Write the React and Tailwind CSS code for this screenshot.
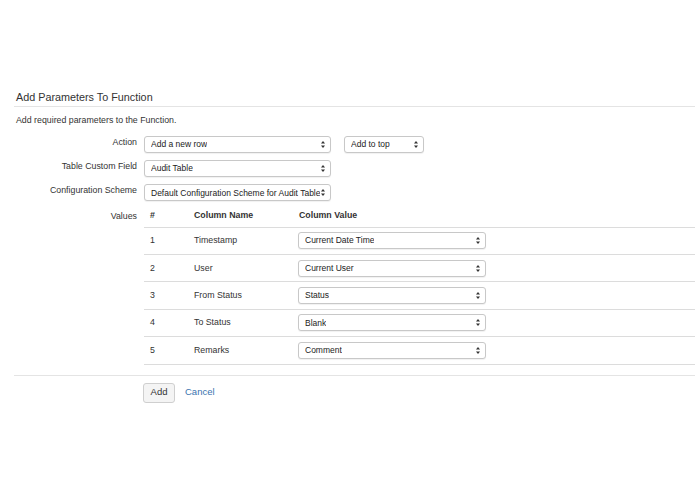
import React from 'react';

function Arrows() {
  return (
    <svg width="4" height="7" viewBox="0 0 4 7" className="shrink-0">
      <path d="M2 0 L4 2.6 L0 2.6 Z" fill="#333" />
      <path d="M2 7 L4 4.4 L0 4.4 Z" fill="#333" />
    </svg>
  );
}

function FakeSelect({ value, width }) {
  return (
    <div
      className={`flex h-[17px] items-center justify-between rounded-[3px] border border-[#c8c8c8] bg-white pl-[6px] pr-[5px] text-[8.5px] text-[#222] shadow-[0_1px_1px_rgba(0,0,0,0.06)] ${width}`}
    >
      <span className="truncate whitespace-nowrap">{value}</span>
      <Arrows />
    </div>
  );
}

const ROWS = [
  { n: 1, name: 'Timestamp', value: 'Current Date Time' },
  { n: 2, name: 'User', value: 'Current User' },
  { n: 3, name: 'From Status', value: 'Status' },
  { n: 4, name: 'To Status', value: 'Blank' },
  { n: 5, name: 'Remarks', value: 'Comment' },
];

function FieldRow({ label, children }) {
  return (
    <div className="flex items-center">
      <div className="w-[123px] shrink-0 pb-[4px] text-right text-[8.8px] text-[#333]">{label}</div>
      <div className="ml-[7px] flex items-center gap-[13px]">{children}</div>
    </div>
  );
}

export default function App() {
  return (
    <div className="h-[494px] w-full overflow-hidden bg-white pt-[90px] text-[#333]" style={{ fontFamily: '"Liberation Sans", Arial, sans-serif' }}>
      <div className="ml-[14px]">
        <h2 className="border-b border-[#e4e4e4] pb-[2px] pl-[2px] text-[10.8px] leading-[14px] text-[#333]">
          Add Parameters To Function
        </h2>
        <p className="mt-[7px] pl-[2px] text-[8.8px] leading-[12px]">Add required parameters to the Function.</p>

        <div className="mt-[10px] flex flex-col gap-[7px]">
          <FieldRow label="Action">
            <FakeSelect value="Add a new row" width="w-[187px]" />
            <FakeSelect value="Add to top" width="w-[80px]" />
          </FieldRow>
          <FieldRow label="Table Custom Field">
            <FakeSelect value="Audit Table" width="w-[187px]" />
          </FieldRow>
          <FieldRow label="Configuration Scheme">
            <FakeSelect value="Default Configuration Scheme for Audit Table" width="w-[187px]" />
          </FieldRow>
        </div>

        <div className="mt-[4px] flex">
          <div className="w-[123px] shrink-0 pt-[4px] text-right text-[8.8px] leading-[12px]">Values</div>
          <div className="ml-[7px] flex-1">
            <div className="flex h-[22px] items-center border-b border-[#dcdcdc] text-[8.8px] font-bold">
              <div className="w-[44px] pl-[6px]">#</div>
              <div className="w-[104px] pl-[6px]">Column Name</div>
              <div className="pl-[7px]">Column Value</div>
            </div>
            {ROWS.map((row) => (
              <div key={row.n} className="flex h-[27.4px] items-center border-b border-[#dcdcdc] text-[8.8px]">
                <div className="w-[44px] pl-[6px]">{row.n}</div>
                <div className="w-[104px] pl-[6px]">{row.name}</div>
                <div className="pl-[6px]">
                  <FakeSelect value={row.value} width="w-[188px]" />
                </div>
              </div>
            ))}
          </div>
        </div>

        <div className="mt-[10px] border-t border-[#e4e4e4] pt-[7px]">
          <div className="ml-[129px] flex items-center gap-[10px]">
            <button type="button" className="h-[20px] w-[32px] rounded-[3px] border border-[#cfcfcf] bg-[#f4f4f4] text-[9.5px] text-[#333]">
              Add
            </button>
            <span className="text-[9.5px] text-[#3b73af]">Cancel</span>
          </div>
        </div>
      </div>
    </div>
  );
}
